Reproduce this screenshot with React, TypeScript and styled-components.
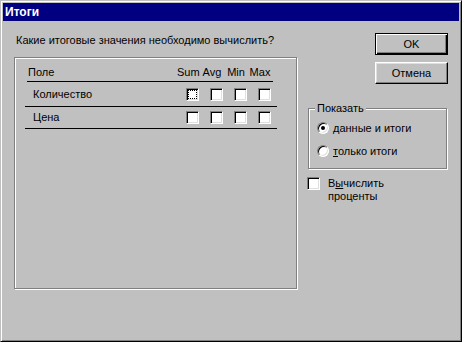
import React from 'react';
import styled, { createGlobalStyle } from 'styled-components';

/* Win95-style "Итоги" (summary options) dialog */

const GlobalStyle = createGlobalStyle`
  html, body {
    margin: 0;
    padding: 0;
    background: #c0c0c0;
  }
  body {
    font-family: "Liberation Sans", Arial, sans-serif;
    font-size: 11px;
    line-height: 13px;
    color: #000;
  }
`;

const Window = styled.div`
  box-sizing: border-box;
  width: 462px;
  height: 342px;
  display: flex;
  flex-direction: column;
  padding: 2px;
  background: #c0c0c0;
  border: 1px solid;
  border-color: #c0c0c0 #000 #000 #c0c0c0;
  box-shadow: inset 1px 1px 0 #fff, inset -1px -1px 0 #808080;
`;

const TitleBar = styled.div`
  flex: none;
  display: flex;
  align-items: center;
  height: 18px;
  padding-left: 2px;
  background: #000080;
  color: #fff;
  font-weight: bold;
  font-size: 12px;
`;

const Body = styled.div`
  flex: 1;
  display: flex;
  padding: 12px 0 0 11px;
`;

const LeftColumn = styled.div`
  display: flex;
  flex-direction: column;
  width: 284px;
`;

const Question = styled.div`
  margin-top: 1px;
  padding-left: 2px;
`;

/* etched frame: dark outline with a white highlight offset by 1px */
const ListBox = styled.div`
  box-sizing: border-box;
  width: 283px;
  height: 232px;
  margin-top: 10px;
  padding: 0 19px 0 10px;
  border: 1px solid #808080;
  box-shadow: inset 1px 1px 0 #fff, 1px 1px 0 #fff;
`;

const HeaderRow = styled.div`
  box-sizing: border-box;
  display: flex;
  height: 24px;
  margin: 0 4px 0 2px;
  padding-top: 8px;
  border-bottom: 1px solid #000;
`;

const HeaderName = styled.div`
  flex: 1;
  padding-left: 1px;
`;

const HeaderCell = styled.div`
  box-sizing: border-box;
  width: 24px;
  padding-right: 2px;
  text-align: center;
`;

const Row = styled.div<{ $h: number }>`
  box-sizing: border-box;
  display: flex;
  align-items: center;
  height: ${(p) => p.$h}px;
  border-bottom: 1px solid #000;
`;

const RowName = styled.div`
  flex: 1;
  padding-left: 8px;
`;

const CheckCell = styled.div`
  box-sizing: border-box;
  width: 24px;
  padding-left: 5px;
  display: flex;
`;

const CheckBox = styled.span<{ $focused?: boolean }>`
  position: relative;
  box-sizing: border-box;
  flex: none;
  display: block;
  width: 13px;
  height: 13px;
  background: #fff;
  border: 1px solid;
  border-color: #808080 #fff #fff #808080;
  box-shadow: inset 1px 1px 0 #000, inset -1px -1px 0 #dfdfdf;

  &::after {
    content: '';
    display: ${(p) => (p.$focused ? 'block' : 'none')};
    position: absolute;
    inset: 1px;
    border: 1px dotted #000;
  }
`;

const RightColumn = styled.div`
  display: flex;
  flex-direction: column;
  width: 141px;
  margin-left: 9px;
`;

const Button = styled.button<{ $default?: boolean }>`
  align-self: flex-end;
  box-sizing: border-box;
  width: 73px;
  height: 22px;
  padding: 0;
  font: inherit;
  color: #000;
  background: #c0c0c0;
  border: 1px solid;
  border-color: ${(p) => (p.$default ? '#000' : '#fff #000 #000 #fff')};
  box-shadow: ${(p) =>
    p.$default
      ? 'inset 1px 1px 0 #fff, inset -1px -1px 0 #000, inset -2px -2px 0 #808080'
      : 'inset -1px -1px 0 #808080, inset 1px 1px 0 #dfdfdf'};

  & + & {
    margin-top: 7px;
  }
`;

const GroupBox = styled.fieldset`
  box-sizing: border-box;
  width: 139px;
  min-width: 0;
  margin: 18px 0 0 1px;
  padding: 4px 0 8px 0;
  border: 1px solid #808080;
  box-shadow: inset 1px 1px 0 #fff, 1px 1px 0 #fff;
`;

const Legend = styled.legend`
  margin-left: 6px;
  padding: 0 2px;
  background: #c0c0c0;
  line-height: 13px;
`;

const RadioRow = styled.label`
  display: flex;
  align-items: center;
  gap: 4px;
  height: 18px;
  padding-left: 8px;

  & + & {
    margin-top: 5px;
  }
`;

const Radio = styled.span<{ $checked?: boolean }>`
  position: relative;
  box-sizing: border-box;
  flex: none;
  width: 12px;
  height: 12px;
  border-radius: 50%;
  background: #fff;
  border: 1px solid;
  border-color: #808080 #fff #fff #808080;
  box-shadow: inset 1px 1px 0 #000, inset -1px -1px 0 #dfdfdf;

  &::after {
    content: '';
    display: ${(p) => (p.$checked ? 'block' : 'none')};
    position: absolute;
    left: 3px;
    top: 3px;
    width: 4px;
    height: 4px;
    border-radius: 50%;
    background: #000;
  }
`;

const CheckRow = styled.label`
  display: flex;
  align-items: flex-start;
  gap: 8px;
  margin-top: 8px;
`;

const CheckText = styled.span`
  display: flex;
  flex-direction: column;
`;

const Key = styled.span`
  text-decoration: underline;
`;

const columns = ['Sum', 'Avg', 'Min', 'Max'];

const fields = [
  { name: 'Количество', h: 25, focus: 0 },
  { name: 'Цена', h: 22, focus: -1 },
];

export default function App() {
  return (
    <>
      <GlobalStyle />
      <Window>
        <TitleBar>Итоги</TitleBar>
        <Body>
          <LeftColumn>
            <Question>Какие итоговые значения необходимо вычислить?</Question>
            <ListBox>
              <HeaderRow>
                <HeaderName>Поле</HeaderName>
                {columns.map((c) => (
                  <HeaderCell key={c}>{c}</HeaderCell>
                ))}
              </HeaderRow>
              {fields.map((f) => (
                <Row key={f.name} $h={f.h}>
                  <RowName>{f.name}</RowName>
                  {columns.map((c, i) => (
                    <CheckCell key={c}>
                      <CheckBox $focused={i === f.focus} />
                    </CheckCell>
                  ))}
                </Row>
              ))}
            </ListBox>
          </LeftColumn>
          <RightColumn>
            <Button $default>OK</Button>
            <Button>Отмена</Button>
            <GroupBox>
              <Legend>Показать</Legend>
              <RadioRow>
                <Radio $checked />
                <span>
                  <Key>д</Key>анные и итоги
                </span>
              </RadioRow>
              <RadioRow>
                <Radio />
                <span>
                  <Key>т</Key>олько итоги
                </span>
              </RadioRow>
            </GroupBox>
            <CheckRow>
              <CheckBox />
              <CheckText>
                <span>
                  В<Key>ы</Key>числить
                </span>
                <span>проценты</span>
              </CheckText>
            </CheckRow>
          </RightColumn>
        </Body>
      </Window>
    </>
  );
}
